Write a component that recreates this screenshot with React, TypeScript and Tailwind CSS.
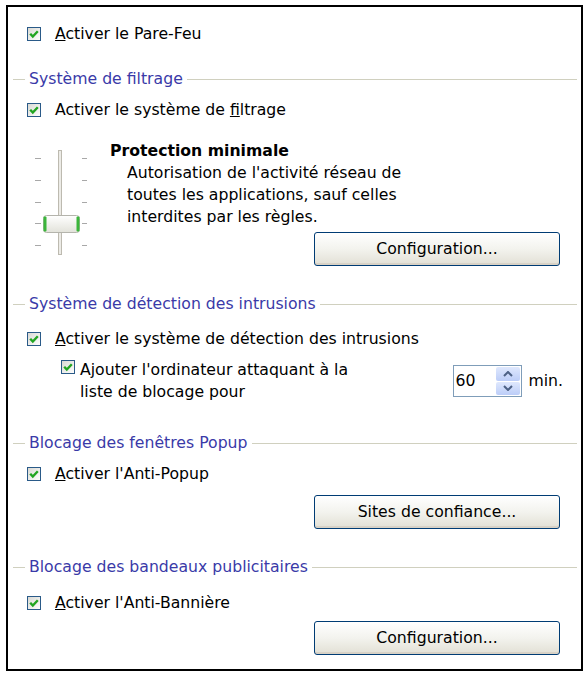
import React from "react";

const FONT = { fontFamily: '"DejaVu Sans", Verdana, sans-serif' };

function Check() {
  return (
    <svg width="14" height="14" viewBox="0 0 14 14" className="shrink-0">
      <defs>
        <linearGradient id="cbg" x1="0" y1="0" x2="1" y2="1">
          <stop offset="0" stopColor="#d8d8d2" />
          <stop offset="1" stopColor="#ffffff" />
        </linearGradient>
      </defs>
      <rect x="0.5" y="0.5" width="13" height="13" fill="url(#cbg)" stroke="#2a5a88" />
      <path d="M3.2 6.8 L5.8 9.6 L10.8 4.2" stroke="#22a522" strokeWidth="2.4" fill="none" />
    </svg>
  );
}

function CheckRow({ children }: { children: React.ReactNode }) {
  return (
    <div className="flex h-[20px] items-center pl-[14px]">
      <Check />
      <span className="ml-[14px] text-[15.7px] leading-[20px] text-black">{children}</span>
    </div>
  );
}

function Group({ title, className }: { title: string; className?: string }) {
  return (
    <div className={"flex h-[20px] items-center " + (className ?? "")}>
      <div className="h-px w-[12px] bg-[#d0d0bf]" />
      <span className="px-[4px] text-[15.7px] leading-[20px] text-[#3a3aa8]">{title}</span>
      <div className="h-px flex-1 bg-[#d0d0bf]" />
    </div>
  );
}

function XPButton({ children }: { children: React.ReactNode }) {
  return (
    <div className="flex justify-end pr-[17px]">
      <div className="flex h-[34px] w-[246px] items-center justify-center rounded-[3px] border border-[#003c74] bg-linear-to-b from-[#ffffff] via-[#f3f3ee] to-[#e2e0d5] text-[15.7px] text-black shadow-[inset_0_-2px_0_#d8d2c6]">
        {children}
      </div>
    </div>
  );
}

function Slider() {
  const ticks = [13, 35, 57, 78, 100];
  return (
    <svg width="60" height="115" viewBox="0 0 60 115" className="shrink-0">
      <defs>
        <linearGradient id="thumb" x1="0" y1="0" x2="0" y2="1">
          <stop offset="0" stopColor="#ffffff" />
          <stop offset="1" stopColor="#e2e2da" />
        </linearGradient>
      </defs>
      {ticks.map((y) => (
        <g key={y}>
          <line x1="5" y1={y + 0.5} x2="11" y2={y + 0.5} stroke="#a8a8a8" />
          <line x1="52" y1={y + 0.5} x2="57" y2={y + 0.5} stroke="#a8a8a8" />
        </g>
      ))}
      <rect x="28.5" y="5.5" width="3" height="104" fill="#ecebe6" stroke="#bdbab0" />
      <rect x="13.5" y="70.5" width="36" height="17" rx="3" fill="url(#thumb)" stroke="#b4b4ac" />
      <rect x="13.5" y="71.5" width="3" height="15" rx="1" fill="#3bb53b" />
      <rect x="46.5" y="71.5" width="3" height="15" rx="1" fill="#3bb53b" />
    </svg>
  );
}

function Spin() {
  return (
    <div className="flex h-[32px] w-[69px] border border-[#7f9db9] bg-white">
      <div className="flex flex-1 items-center pl-[1px] text-[15.7px]">60</div>
      <div className="flex w-[26px] flex-col gap-px p-px">
        <div className="flex flex-1 items-center justify-center rounded-[2px] bg-linear-to-b from-[#dfe8fd] to-[#bccdf8]">
          <svg width="10" height="6" viewBox="0 0 10 6">
            <path d="M1 5 L5 1 L9 5" stroke="#4d6185" strokeWidth="2" fill="none" />
          </svg>
        </div>
        <div className="flex flex-1 items-center justify-center rounded-[2px] bg-linear-to-b from-[#dfe8fd] to-[#bccdf8]">
          <svg width="10" height="6" viewBox="0 0 10 6">
            <path d="M1 1 L5 5 L9 1" stroke="#4d6185" strokeWidth="2" fill="none" />
          </svg>
        </div>
      </div>
    </div>
  );
}

export default function App() {
  return (
    <div className="h-[673px] w-[585px] bg-white pl-[6px] pt-[5px]" style={FONT}>
      <div className="flex h-[666px] w-[577px] flex-col border-2 border-black pl-[5px] pr-[4px]">
        <div className="mt-[17px]">
          <CheckRow>
            <span className="underline">A</span>ctiver le Pare-Feu
          </CheckRow>
        </div>

        <Group title="Système de filtrage" className="mt-[25px]" />
        <div className="mt-[11px]">
          <CheckRow>
            Activer le système de <span className="underline">f</span>iltrage
          </CheckRow>
        </div>

        <div className="flex">
          <div className="ml-[17px] mt-[25px]">
            <Slider />
          </div>
          <div className="ml-[20px] flex flex-1 flex-col pt-[20px]">
            <div className="text-[15.7px] font-bold leading-[22px]">Protection minimale</div>
            <div className="pl-[17px] text-[15.7px] leading-[22px]">
              Autorisation de l'activité réseau de
              <br />
              toutes les applications, sauf celles
              <br />
              interdites par les règles.
            </div>
            <div className="mt-[4px]">
              <XPButton>Configuration...</XPButton>
            </div>
          </div>
        </div>

        <Group title="Système de détection des intrusions" className="mt-[28px]" />
        <div className="mt-[15px]">
          <CheckRow>
            <span className="underline">A</span>ctiver le système de détection des intrusions
          </CheckRow>
        </div>
        <div className="mt-[10px] flex items-center pl-[48px]">
          <div className="flex flex-1 items-start">
            <div className="pt-[1px]">
              <Check />
            </div>
            <div className="ml-[5px] text-[15.7px] leading-[22px]">
              Ajouter l'ordinateur attaquant à la
              <br />
              liste de blocage pour
            </div>
          </div>
          <Spin />
          <span className="ml-[6px] mr-[14px] text-[15.7px]">min.</span>
        </div>

        <Group title="Blocage des fenêtres Popup" className="mt-[30px]" />
        <div className="mt-[11px]">
          <CheckRow>
            <span className="underline">A</span>ctiver l'Anti-Popup
          </CheckRow>
        </div>
        <div className="mt-[11px]">
          <XPButton>Sites de confiance...</XPButton>
        </div>

        <Group title="Blocage des bandeaux publicitaires" className="mt-[28px]" />
        <div className="mt-[16px]">
          <CheckRow>
            <span className="underline">A</span>ctiver l'Anti-Bannière
          </CheckRow>
        </div>
        <div className="mt-[8px]">
          <XPButton>Configuration...</XPButton>
        </div>
      </div>
    </div>
  );
}
